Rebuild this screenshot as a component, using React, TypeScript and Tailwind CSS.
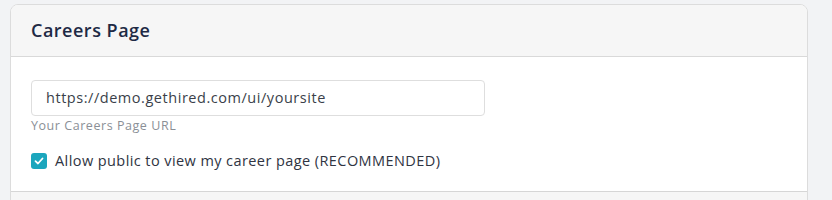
export default function App() {
  return (
    <div className="w-[832px] h-[200px] bg-[#f2f3f5] pt-[4px] pl-[10px] overflow-hidden" style={{ fontFamily: '"Open Sans", "Noto Sans", sans-serif' }}>
      <div className="w-[798px] rounded-t-[8px] border border-[#dcdcdc] bg-white overflow-hidden">
        <div className="h-[52px] bg-[#f6f6f6] border-b border-[#d9d9d9] flex items-center pl-[20px]">
          <span className="text-[18px] font-semibold text-[#1e2a45] tracking-[0.5px]">Careers Page</span>
        </div>
        <div className="pl-[20px] pt-[23px] pb-[19px]">
          <div className="w-[454px] h-[36px] rounded-[4px] border border-[#dedede] flex items-center pl-[14px] text-[14.5px] text-[#3a3f4a] tracking-[0.54px]">
            https://demo.gethired.com/ui/yoursite
          </div>
          <div className="mt-[1px] text-[12.5px] text-[#8a8f96] tracking-[0.55px]">Your Careers Page URL</div>
          <label className="mt-[14px] flex items-center gap-[8px]">
            <span className="w-[16px] h-[16px] rounded-[3px] bg-[#1ba6bd] flex items-center justify-center">
              <svg width="10" height="10" viewBox="0 0 10 10" fill="none"><path d="M1.5 5.2 L4 7.5 L8.5 2.5" stroke="white" strokeWidth="1.8" strokeLinecap="round" strokeLinejoin="round" /></svg>
            </span>
            <span className="text-[14.5px] text-[#2f3442] tracking-[0.42px]">Allow public to view my career page (RECOMMENDED)</span>
          </label>
        </div>
        <div className="h-[20px] bg-[#f6f6f6] border-t border-[#d6d6d6]" />
      </div>
    </div>
  );
}
